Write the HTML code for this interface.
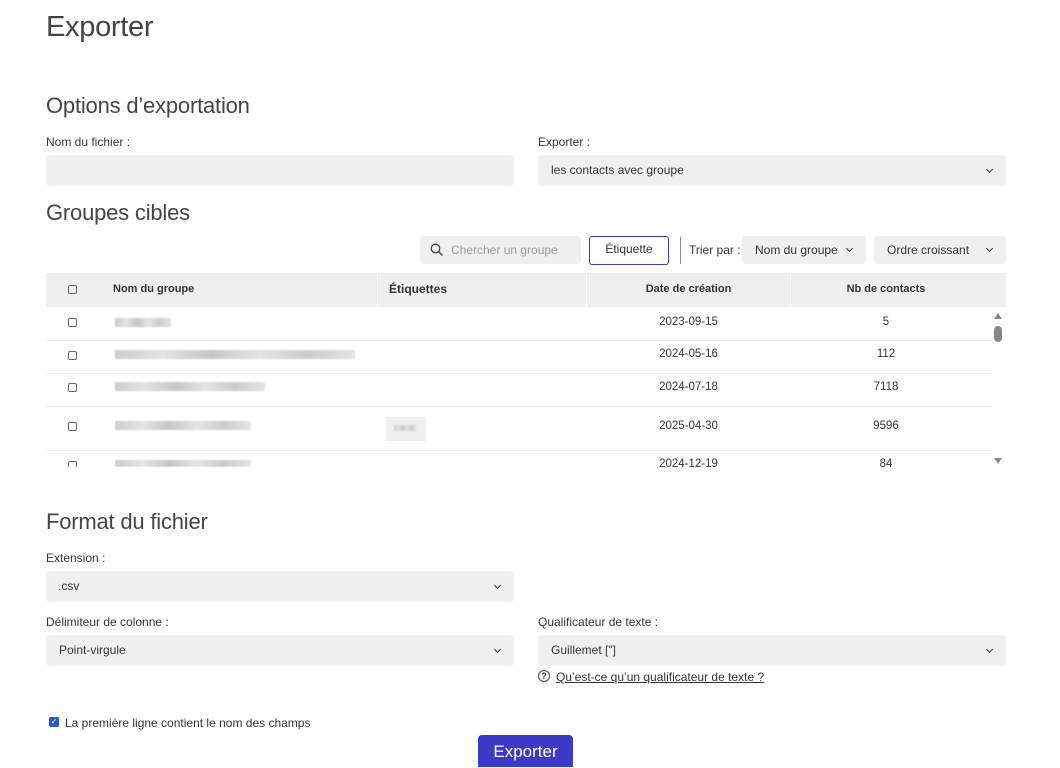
<!DOCTYPE html>
<html><head><meta charset="utf-8"><style>
*{box-sizing:border-box;margin:0;padding:0}
body{width:1060px;height:767px;background:#fff;font-family:"Liberation Sans",sans-serif;color:#333;position:relative;overflow:hidden;font-size:12px}
.a{position:absolute;white-space:nowrap}
.h1{font-size:29px;color:#444;letter-spacing:-0.3px}
.h2{font-size:22px;color:#444;letter-spacing:-0.2px}
.lbl{font-size:12px;color:#333}
.inp{position:absolute;background:#f0f0f0;border-radius:4px;height:31px}
.sel{font-size:12px;color:#333;padding:0 0 0 13px;line-height:31px}
.chev{position:absolute;right:14px;top:12px;width:5px;height:5px;border-right:1.5px solid #333;border-bottom:1.5px solid #333;transform:rotate(45deg)}
.cb{position:absolute;width:9px;height:9px;border:1px solid #666;border-radius:2px;left:68px}
.row{position:absolute;left:46px;width:946px;height:1px;background:#eaeaea}
.blur{position:absolute;height:9px;background:linear-gradient(90deg,#ccc,#e4e4e4 20%,#c6c6c6 40%,#e4e4e4 60%,#ccc 80%,#e4e4e4);filter:blur(0.8px)}
.c{position:absolute;text-align:center;font-size:11.5px}
</style></head><body>
<div class="a h1" style="left:46px;top:11px">Exporter</div>
<div class="a h2" style="left:46px;top:93px">Options d’exportation</div>
<div class="a lbl" style="left:46px;top:135px">Nom du fichier :</div>
<div class="a lbl" style="left:538px;top:135px">Exporter :</div>
<div class="inp" style="left:46px;top:155px;width:468px"></div>
<div class="inp sel" style="left:538px;top:155px;width:468px">les contacts avec groupe<span class="chev"></span></div>

<div class="a h2" style="left:46px;top:200px">Groupes cibles</div>
<div class="inp" style="left:420px;top:236px;width:161px;height:28px">
<svg style="position:absolute;left:10px;top:7px" width="14" height="14" viewBox="0 0 14 14"><circle cx="5.5" cy="5.5" r="4.3" fill="none" stroke="#444" stroke-width="1.3"/><path d="M8.7 8.7L12.5 12.5" stroke="#444" stroke-width="1.4"/></svg>
<span class="a" style="left:31px;top:7px;color:#9a9a9a;font-size:12px">Chercher un groupe</span></div>
<div class="a" style="left:589px;top:236px;width:80px;height:29px;border:1px solid #3d3ac8;border-radius:3px;text-align:center;line-height:24px;font-size:12px">Étiquette</div>
<div class="a" style="left:680px;top:237px;width:1px;height:27px;background:#888"></div>
<div class="a lbl" style="left:689px;top:243px">Trier par :</div>
<div class="inp sel" style="left:742px;top:236px;width:124px;height:28px;line-height:28px">Nom du groupe<span class="chev" style="top:10px"></span></div>
<div class="inp sel" style="left:874px;top:236px;width:132px;height:28px;line-height:28px">Ordre croissant<span class="chev" style="top:10px"></span></div>

<div class="a" style="left:46px;top:273px;width:960px;height:34px;background:#efefef"></div>
<div class="a" style="left:377px;top:273px;width:1px;height:34px;background:#fff"></div>
<div class="a" style="left:586px;top:273px;width:1px;height:34px;background:#fff"></div>
<div class="a" style="left:790px;top:273px;width:1px;height:34px;background:#fff"></div>
<div class="cb" style="top:285px"></div>
<div class="a" style="left:113px;top:283px;font-size:11px;font-weight:bold;color:#333">Nom du groupe</div>
<div class="a" style="left:389px;top:282px;font-size:12px;font-weight:bold;color:#333">Étiquettes</div>
<div class="c" style="left:587px;width:203px;top:283px;font-size:11px;font-weight:bold">Date de création</div>
<div class="c" style="left:791px;width:190px;top:283px;font-size:11px;font-weight:bold">Nb de contacts</div>

<div class="cb" style="top:318px"></div><div class="blur" style="left:115px;top:318px;width:56px"></div>
<div class="c" style="left:587px;width:203px;top:316px">2023-09-15</div><div class="c" style="left:791px;width:190px;top:316px">5</div>
<div class="row" style="top:340px"></div>
<div class="cb" style="top:351px"></div><div class="blur" style="left:115px;top:350px;width:240px"></div>
<div class="c" style="left:587px;width:203px;top:348px">2024-05-16</div><div class="c" style="left:791px;width:190px;top:348px">112</div>
<div class="row" style="top:373px"></div>
<div class="cb" style="top:383px"></div><div class="blur" style="left:115px;top:382px;width:150px"></div>
<div class="c" style="left:587px;width:203px;top:381px">2024-07-18</div><div class="c" style="left:791px;width:190px;top:381px">7118</div>
<div class="row" style="top:406px"></div>
<div class="cb" style="top:422px"></div><div class="blur" style="left:115px;top:421px;width:136px"></div>
<div class="a" style="left:386px;top:417px;width:40px;height:24px;background:#f0f0f0"></div><div class="blur" style="left:394px;top:425px;width:22px;height:6px"></div>
<div class="c" style="left:587px;width:203px;top:420px">2025-04-30</div><div class="c" style="left:791px;width:190px;top:420px">9596</div>
<div class="row" style="top:450px"></div>
<div class="cb" style="top:461px;height:7px;border-bottom:none"></div><div class="blur" style="left:115px;top:460px;width:136px;height:7px"></div>
<div class="a" style="left:46px;top:467px;width:960px;height:20px;background:#fff"></div>
<div class="c" style="left:587px;width:203px;top:458px;height:9px;overflow:hidden">2024-12-19</div><div class="c" style="left:791px;width:190px;top:458px;height:9px;overflow:hidden">84</div>
<div class="a" style="left:994px;top:313px;width:0;height:0;border-left:4px solid transparent;border-right:4px solid transparent;border-bottom:6px solid #888"></div>
<div class="a" style="left:994px;top:326px;width:8px;height:16px;border-radius:4px;background:#888"></div>
<div class="a" style="left:994px;top:458px;width:0;height:0;border-left:4px solid transparent;border-right:4px solid transparent;border-top:6px solid #888"></div>

<div class="a h2" style="left:46px;top:509px">Format du fichier</div>
<div class="a lbl" style="left:46px;top:551px">Extension :</div>
<div class="inp sel" style="left:46px;top:571px;width:468px;padding-left:12px">.csv<span class="chev"></span></div>
<div class="a lbl" style="left:46px;top:615px">Délimiteur de colonne :</div>
<div class="a lbl" style="left:538px;top:615px">Qualificateur de texte :</div>
<div class="inp sel" style="left:46px;top:635px;width:468px">Point-virgule<span class="chev"></span></div>
<div class="inp sel" style="left:538px;top:635px;width:468px">Guillemet ["]<span class="chev"></span></div>
<div class="a" style="left:538px;top:670px;width:12px;height:12px;border:1px solid #444;border-radius:50%;font-size:9px;text-align:center;line-height:10px;font-weight:bold">?</div>
<div class="a" style="left:556px;top:670px;font-size:12px;text-decoration:underline;color:#333">Qu’est-ce qu’un qualificateur de texte ?</div>
<div class="a" style="left:49px;top:717px;width:10px;height:10px;background:#2a58c8;border-radius:2px;color:#fff;font-size:8px;line-height:10px;text-align:center">✓</div>
<div class="a lbl" style="left:65px;top:716px">La première ligne contient le nom des champs</div>
<div class="a" style="left:478px;top:735px;width:95px;height:32px;background:#3d3ac8;border-radius:4px 4px 0 0;color:#fff;font-size:17px;text-align:center;line-height:33px">Exporter</div>
</body></html>
